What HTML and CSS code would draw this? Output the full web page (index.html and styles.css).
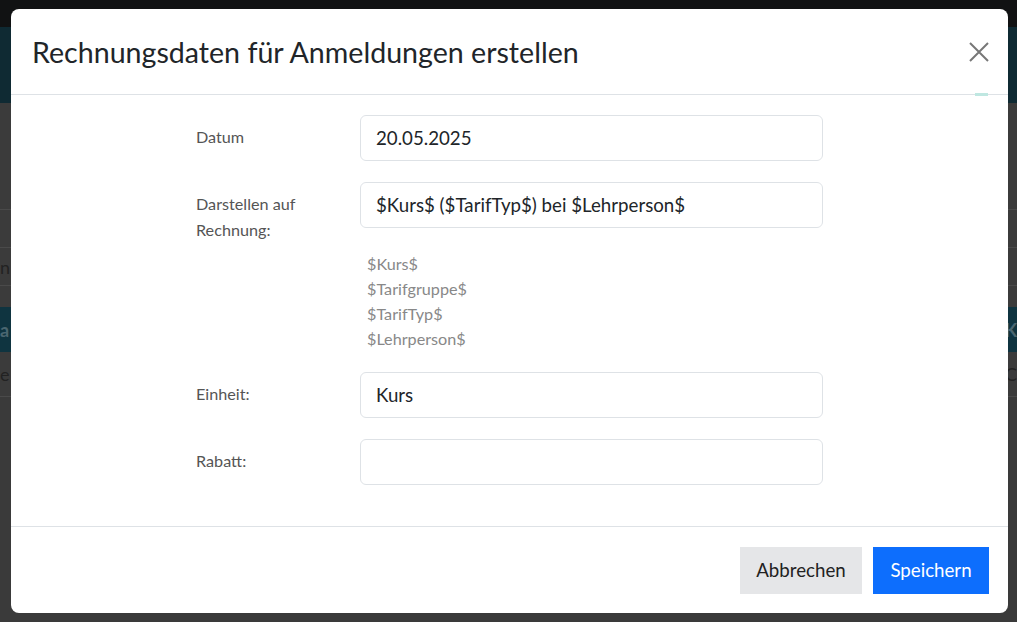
FILE: index.html
```html
<!DOCTYPE html>
<html lang="de">
<head>
<meta charset="utf-8">
<title>Rechnungsdaten</title>
<link rel="stylesheet" href="styles.css">
</head>
<body>
<div class="page">
  <div class="bg-top"></div>
  <div class="bg-head"></div>
  <div class="bg-area"></div>
  <div class="bg-row"></div>
  <div class="bg-row"><span class="bg-text">n</span></div>
  <div class="bg-gap"></div>
  <div class="bg-thead"><span class="bg-text teal-text">a</span><span class="bg-text teal-text">K</span></div>
  <div class="bg-trow"><span class="bg-text">e</span><span class="bg-text">C</span></div>
  <div class="bg-rest"></div>
</div>

<div class="modal">
  <div class="modal-header">
    <h1 class="modal-title">Rechnungsdaten für Anmeldungen erstellen</h1>
    <svg class="close" width="22" height="22" viewBox="0 0 22 22" aria-hidden="true">
      <path d="M2 2 L20 20 M20 2 L2 20" stroke="#777" stroke-width="2" fill="none"/>
    </svg>
    <span class="scroll-mark"></span>
  </div>
  <div class="modal-body">
    <div class="form">
      <div class="row">
        <label class="lbl">Datum</label>
        <div class="field"><div class="input">20.05.2025</div></div>
      </div>
      <div class="row">
        <label class="lbl">Darstellen auf Rechnung:</label>
        <div class="field">
          <div class="input">$Kurs$ ($TarifTyp$) bei $Lehrperson$</div>
          <div class="hints">
            <div>$Kurs$</div>
            <div>$Tarifgruppe$</div>
            <div>$TarifTyp$</div>
            <div>$Lehrperson$</div>
          </div>
        </div>
      </div>
      <div class="row">
        <label class="lbl">Einheit:</label>
        <div class="field"><div class="input">Kurs</div></div>
      </div>
      <div class="row">
        <label class="lbl">Rabatt:</label>
        <div class="field"><div class="input"></div></div>
      </div>
    </div>
  </div>
  <div class="modal-footer">
    <button class="btn btn-cancel">Abbrechen</button>
    <button class="btn btn-save">Speichern</button>
  </div>
</div>
</body>
</html>
```

FILE: styles.css
```css
* { box-sizing: border-box; }
html, body { margin: 0; padding: 0; }
body {
  width: 1017px;
  height: 622px;
  overflow: hidden;
  position: relative;
  background: #3a3a3a;
  font-family: Lato, "Open Sans", sans-serif;
}
.page { display: flex; flex-direction: column; height: 622px; }
.bg-top { height: 27px; background: #111213; }
.bg-head { height: 76px; background: #0f2a33; }
.bg-area { height: 107px; background: #3b3b3b; border-bottom: 1px solid #4a4a4a; }
.bg-row { height: 38px; background: #3b3b3b; border-bottom: 1px solid #4a4a4a; display: flex; align-items: center; }
.bg-gap { height: 21px; background: #3b3b3b; }
.bg-thead { height: 45px; background: #0f3440; display: flex; align-items: center; justify-content: space-between; }
.bg-trow { height: 45px; background: #3b3b3b; border-bottom: 1px solid #4a4a4a; display: flex; align-items: center; justify-content: space-between; }
.bg-rest { flex: 1; background: #3a3a3a; }
.bg-text { font-size: 18px; color: #222; }
.teal-text { color: #4a6670; font-weight: bold; }

.modal {
  position: absolute;
  left: 11px;
  top: 9px;
  width: 997px;
  height: 604px;
  background: #fff;
  border-radius: 8px;
  display: flex;
  flex-direction: column;
  overflow: hidden;
}
.modal-header {
  position: relative;
  height: 86px;
  border-bottom: 1px solid #dee2e6;
  display: flex;
  align-items: center;
  justify-content: space-between;
  padding: 0 18px 0 21px;
}
.modal-title {
  margin: 0;
  font-weight: 400;
  font-size: 28.6px;
  color: #212529;
}
.close { display: block; }
.scroll-mark {
  position: absolute;
  right: 20px;
  bottom: -2px;
  width: 13px;
  height: 3px;
  background: #bfe7e1;
}
.modal-body {
  flex: 1;
  padding-top: 20px;
}
.form {
  width: 627px;
  margin: 0 auto;
  display: flex;
  flex-direction: column;
  gap: 21px;
}
.row { display: flex; }
.lbl {
  width: 164px;
  flex: none;
  font-size: 16.2px;
  line-height: 26px;
  color: #555;
  padding-top: 9px;
  padding-right: 40px;
}
.field { width: 463px; }
.input {
  height: 46px;
  border: 1px solid #dee2e6;
  border-radius: 6px;
  font-size: 18.7px;
  color: #212529;
  padding: 0 15px;
  display: flex;
  align-items: center;
}
.hints {
  padding: 23px 0 0 7px;
  font-size: 16.2px;
  line-height: 25px;
  color: #888;
}
.modal-footer {
  height: 87px;
  border-top: 1px solid #dee2e6;
  display: flex;
  justify-content: flex-end;
  align-items: center;
  gap: 11px;
  padding: 0 19px 0 0;
}
.btn {
  font-family: inherit;
  font-size: 18.7px;
  height: 47px;
  border: none;
  border-radius: 0;
  padding: 0 10px;
}
.btn-cancel { background: #e5e6e8; color: #222; width: 122px; }
.btn-save { background: #0d6efd; color: #fff; width: 116px; }
```
